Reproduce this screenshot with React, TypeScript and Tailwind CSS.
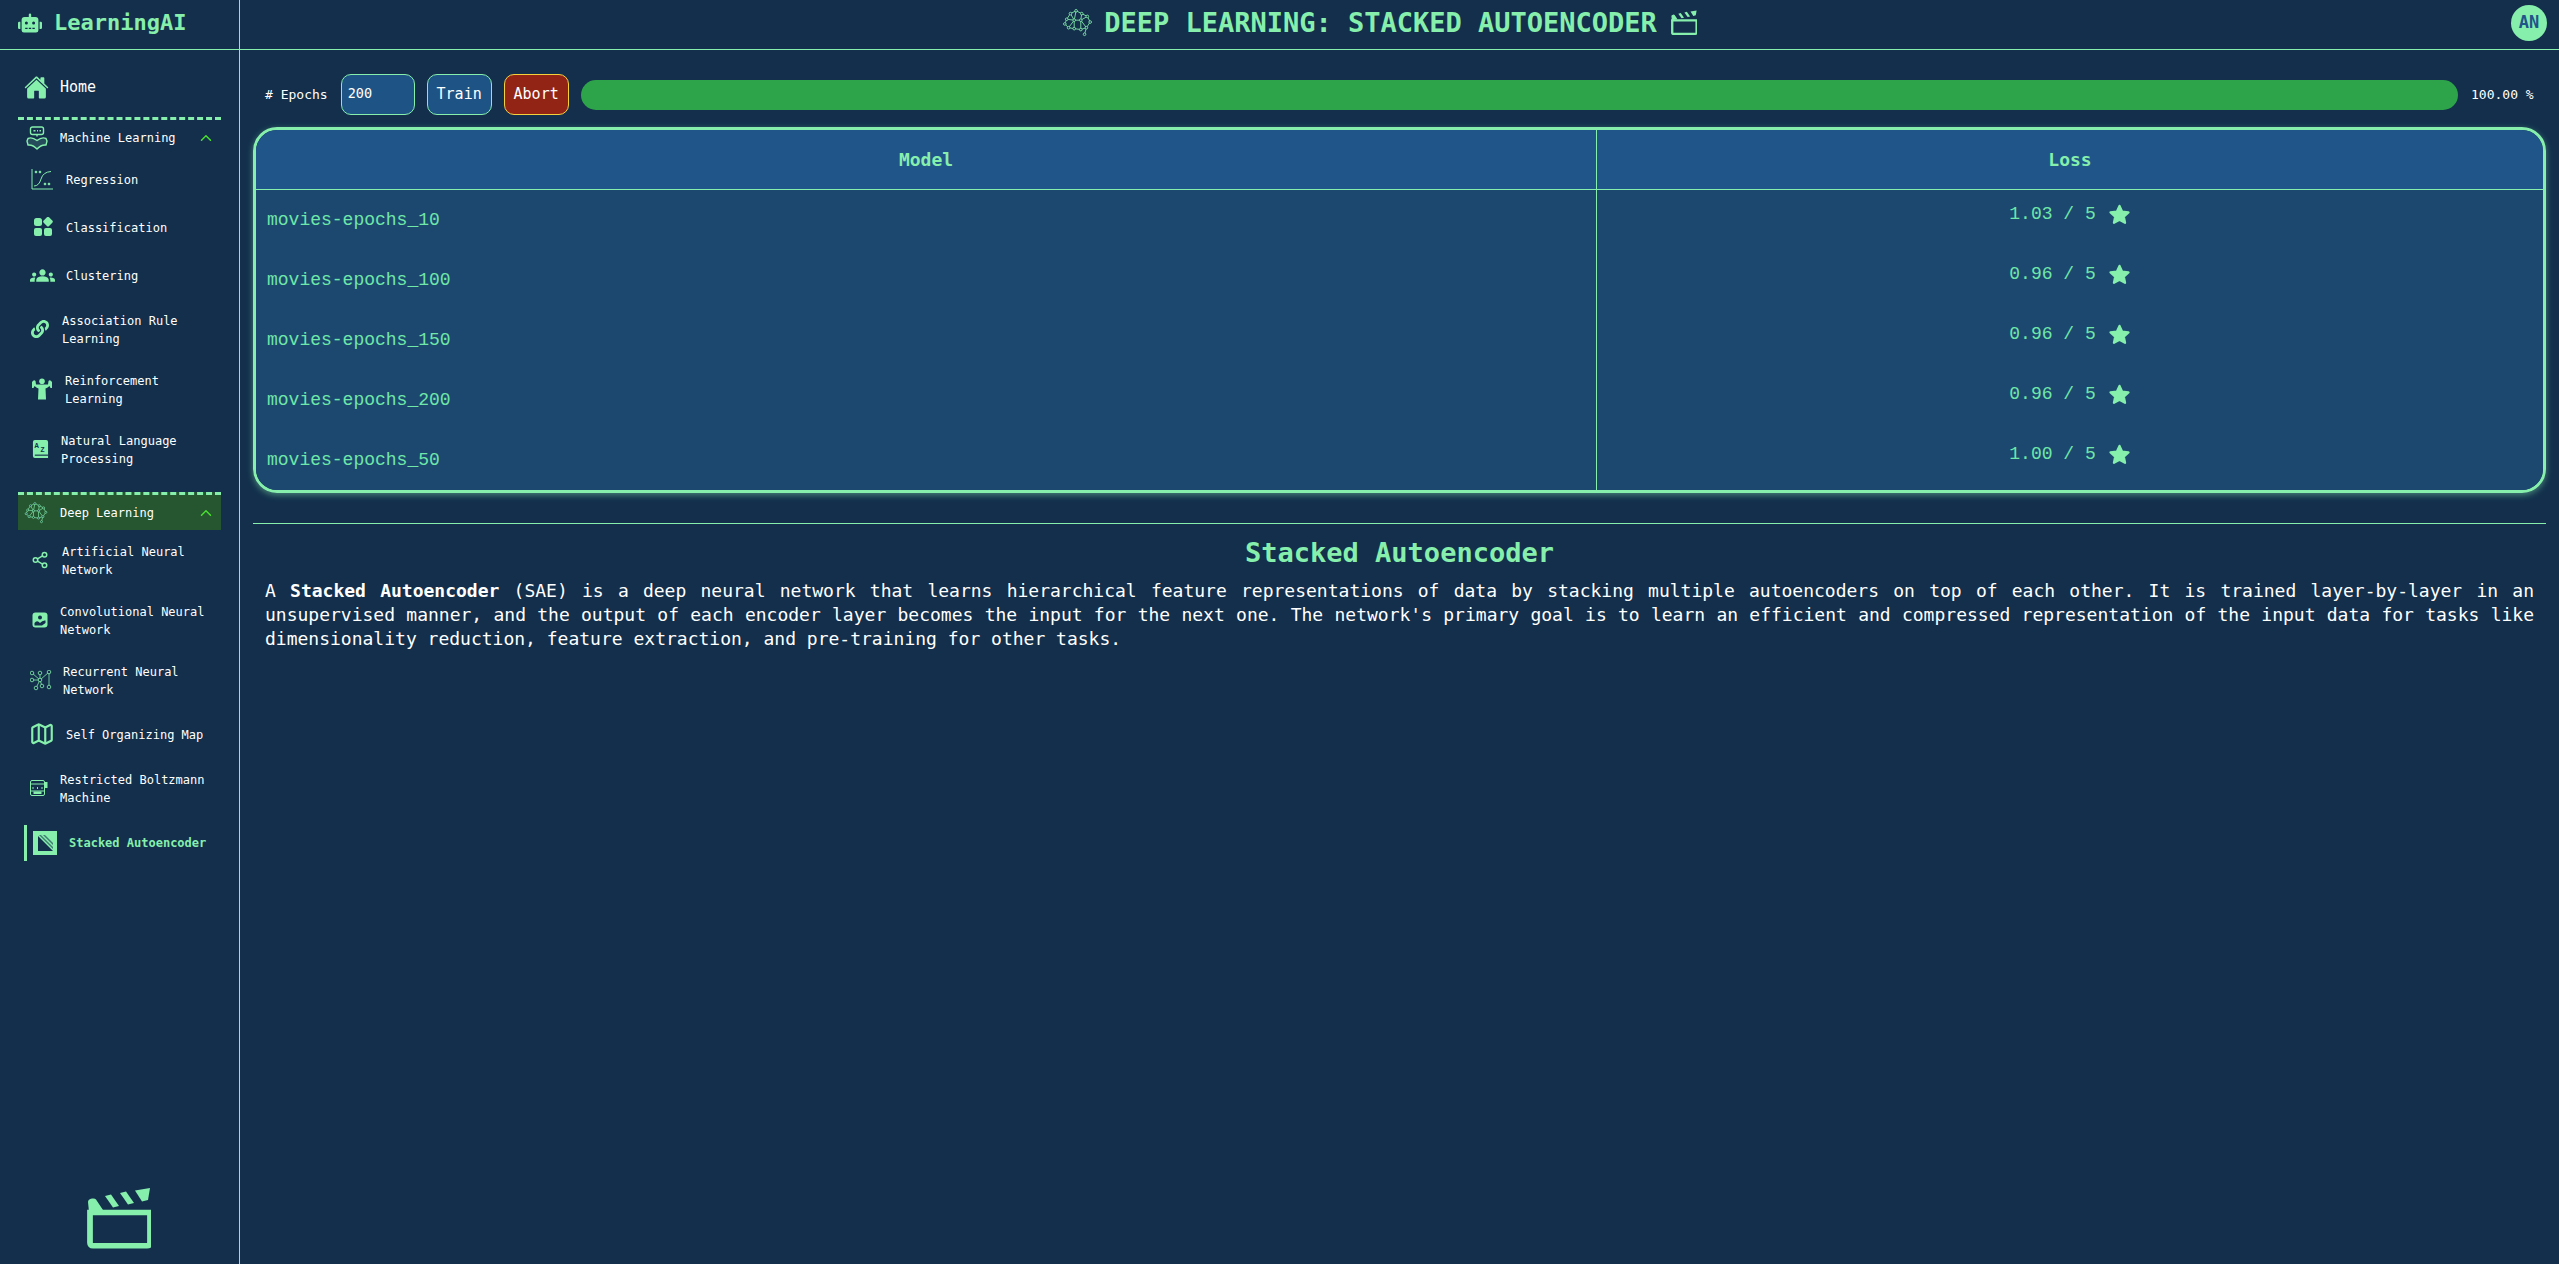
import { FaLink, FaRobot } from 'react-icons/fa'
import { IoHome } from 'react-icons/io5'
import { LuChevronUp, LuMap, LuShare2 } from 'react-icons/lu'
import { MdGroups } from 'react-icons/md'

const mono = "font-['DejaVu_Sans_Mono','Liberation_Mono',monospace]"

function Brain({ className }: { className?: string }) {
  const nodes = [
    [5, 12], [9, 6], [15, 3], [21, 6], [27, 9], [30, 15], [26, 21], [20, 23], [24, 28], [13, 22], [7, 21], [3, 17], [13, 13], [20, 13],
  ]
  const links = [
    [0, 1], [1, 2], [2, 3], [3, 4], [4, 5], [5, 6], [6, 7], [7, 9], [9, 10], [10, 11], [11, 0], [12, 13], [12, 1], [12, 2], [13, 3], [13, 4], [13, 6], [13, 7], [12, 9], [12, 0], [6, 8], [12, 10],
  ]
  return (
    <svg viewBox="0 0 33 32" className={className} fill="none" stroke="currentColor" strokeWidth="0.9">
      {links.map(([a, b], i) => (
        <line key={i} x1={nodes[a][0]} y1={nodes[a][1]} x2={nodes[b][0]} y2={nodes[b][1]} />
      ))}
      {nodes.map(([x, y], i) => (
        <circle key={i} cx={x} cy={y} r="1.4" fill="#132f4c" />
      ))}
    </svg>
  )
}

function Clapper({ className, strokeWidth = 2.4 }: { className?: string; strokeWidth?: number }) {
  return (
    <svg viewBox="0 0 64 62" className={className} fill="currentColor">
      <path d="M1 14 Q1 11 5 10.5 Q8 10 9 11.500 L16 22 L2 24 Z" />
      <path d="M18 8 L24 6.500 L32 18 L26 19.500 Z" />
      <path d="M33 5 L39 3.500 L47 15 L41 16.500 Z" />
      <path d="M48 2.500 L63 0 L61 12 L55 13.500 Z" />
      <path
        d="M3 26 H63 V57 Q63 60 60 60 H6 Q3 60 3 57 Z"
        fill="none"
        stroke="currentColor"
        strokeWidth={strokeWidth * 2.4}
        transform="translate(0 -1) scale(1 0.98)"
      />
    </svg>
  )
}

function ReaderBot({ className }: { className?: string }) {
  return (
    <svg viewBox="0 0 24 24" className={className} fill="none" stroke="currentColor" strokeWidth="1.400" strokeLinejoin="round">
      <rect x="5.500" y="1" width="13" height="7.500" rx="2" />
      <path d="M8.500 4.800h2M12 4.800h1M14.500 4.800h1.500" />
      <path d="M12 8.500v2" />
      <path d="M3 12.500 Q7 10.500 12 14.500 Q17 10.500 21 12.500 L22 15 L21 19 Q16 18.500 12 23 Q8 18.500 3 19 L2 15 Z" fill="currentColor" fillOpacity="0.15" />
    </svg>
  )
}

function RegressionIcon({ className }: { className?: string }) {
  return (
    <svg viewBox="0 0 22 22" className={className} fill="none" stroke="currentColor" strokeWidth="1">
      <path d="M1 1v20h21" />
      <path d="M3 18 Q8 18 10 11 Q12 4 20 3.500" />
      <circle cx="5" cy="4" r="0.900" fill="currentColor" />
      <circle cx="9" cy="4" r="0.900" fill="currentColor" />
      <circle cx="14" cy="16" r="0.900" fill="currentColor" />
      <circle cx="18" cy="16" r="0.900" fill="currentColor" />
    </svg>
  )
}

function ClassIcon({ className }: { className?: string }) {
  return (
    <svg viewBox="0 0 20 20" className={className} fill="currentColor">
      <rect x="1" y="1" width="8" height="8" rx="2.500" />
      <rect x="11.200" y="0.800" width="7.600" height="7.600" rx="1.500" transform="rotate(45 15 4.600)" />
      <rect x="1" y="11" width="8" height="8" rx="2" />
      <rect x="11" y="11" width="8" height="8" rx="2" />
    </svg>
  )
}

function MuscleIcon({ className }: { className?: string }) {
  return (
    <svg viewBox="0 0 22 22" className={className} fill="currentColor">
      <circle cx="11" cy="3.200" r="2.800" />
      <path d="M1 4 Q3 1 4.500 3 L5 6.500 Q8 6.500 11 6.500 Q14 6.500 17 6.500 L17.500 3 Q19 1 21 4 L21 10 L19.500 10 L18.500 8 Q16 10 14.500 10.500 L15 21.500 H7 L7.500 10.500 Q6 10 3.500 8 L2.500 10 L1 10 Z" />
    </svg>
  )
}

function BookAzIcon({ className }: { className?: string }) {
  return (
    <svg viewBox="0 0 18 22" className={className}>
      <path d="M3 1 H15 Q17 1 17 3 V20 H3 Q1 20 1 18 V3 Q1 1 3 1 Z" fill="currentColor" />
      <path d="M3 17 H17" stroke="#132f4c" strokeWidth="1.200" />
      <text x="2.500" y="9" fontSize="7" fontWeight="700" fill="#132f4c" fontFamily="Liberation Sans, sans-serif">A</text>
      <text x="9" y="14" fontSize="7" fontWeight="700" fill="#132f4c" fontFamily="Liberation Sans, sans-serif">Z</text>
    </svg>
  )
}

function ImageIcon({ className }: { className?: string }) {
  return (
    <svg viewBox="0 0 16 16" className={className}>
      <rect x="0.500" y="0.500" width="15" height="15" rx="3" fill="currentColor" />
      <circle cx="8" cy="5.500" r="2" fill="#132f4c" />
      <path d="M2.500 13.500 L2.500 11 Q5 7.500 8 11 Q10.500 8 13.500 8.500 V11 L10 13.500 Z" fill="#132f4c" />
    </svg>
  )
}

function RnnIcon({ className }: { className?: string }) {
  const pts = [[2, 3], [10, 3], [19, 2], [2, 10], [10, 10], [6, 18], [12, 16], [19, 17]]
  return (
    <svg viewBox="0 0 22 21" className={className} fill="none" stroke="currentColor" strokeWidth="0.800">
      <path d="M2 3 L10 10 L19 2 L19 17 M10 3 V10 L2 10 M10 10 L6 18 M10 10 L12 16" />
      {pts.map(([x, y], i) => (
        <circle key={i} cx={x} cy={y} r="1.800" fill="#132f4c" />
      ))}
    </svg>
  )
}

function SlotIcon({ className }: { className?: string }) {
  return (
    <svg viewBox="0 0 18 16" className={className} fill="none" stroke="currentColor" strokeWidth="1">
      <rect x="0.500" y="0.500" width="14" height="15" rx="1.500" />
      <path d="M0.500 4h14M3 7v2M7.500 7v2M12 7v2M0.500 11h14" />
      <rect x="4" y="12" width="7" height="1.500" fill="currentColor" />
      <rect x="15" y="2" width="2.500" height="6" fill="currentColor" stroke="none" />
    </svg>
  )
}

function StackedIcon({ className }: { className?: string }) {
  return (
    <svg viewBox="0 0 24 24" className={className}>
      <rect width="24" height="24" fill="currentColor" />
      <path d="M5 5 L20 20 H5 Z" fill="#132f4c" />
      <path d="M6 4 L20 18 V16 L8 4 Z M10 4 L20 14 V12 L12 4 Z" fill="#132f4c" fillOpacity="0.6" />
    </svg>
  )
}

type NavItem = {
  label: string[]
  icon: React.ReactNode
  gap: string
}

const mlItems: NavItem[] = [
  { label: ['Regression'], icon: <RegressionIcon className="h-[22px] w-[22px] shrink-0" />, gap: 'ml-[13px]' },
  { label: ['Classification'], icon: <ClassIcon className="ml-[2px] h-[20px] w-[20px] shrink-0" />, gap: 'ml-[13px]' },
  { label: ['Clustering'], icon: <MdGroups className="-ml-[1px] h-[25px] w-[25px] shrink-0" />, gap: 'ml-[13px]' },
  { label: ['Association Rule', 'Learning'], icon: <FaLink className="h-[18px] w-[18px] shrink-0" />, gap: 'ml-[9px]' },
  { label: ['Reinforcement', 'Learning'], icon: <MuscleIcon className="h-[22px] w-[22px] shrink-0" />, gap: 'ml-[12px]' },
  { label: ['Natural Language', 'Processing'], icon: <BookAzIcon className="ml-[1px] h-[21px] w-[17px] shrink-0" />, gap: 'ml-[8px]' },
]

const dlItems: NavItem[] = [
  { label: ['Artificial Neural', 'Network'], icon: <LuShare2 className="h-[18px] w-[18px] shrink-0" />, gap: 'ml-[9px]' },
  { label: ['Convolutional Neural', 'Network'], icon: <ImageIcon className="ml-[1px] h-[16px] w-[16px] shrink-0" />, gap: 'ml-[7px]' },
  { label: ['Recurrent Neural', 'Network'], icon: <RnnIcon className="-ml-[1px] h-[21px] w-[22px] shrink-0" />, gap: 'ml-[10px]' },
  { label: ['Self Organizing Map'], icon: <LuMap className="-ml-[2px] h-[26px] w-[26px] shrink-0" />, gap: 'ml-[13px]' },
  { label: ['Restricted Boltzmann', 'Machine'], icon: <SlotIcon className="-ml-[1px] h-[16px] w-[18px] shrink-0" />, gap: 'ml-[7px]' },
]

const results = [
  { model: 'movies-epochs_10', loss: '1.03' },
  { model: 'movies-epochs_100', loss: '0.96' },
  { model: 'movies-epochs_150', loss: '0.96' },
  { model: 'movies-epochs_200', loss: '0.96' },
  { model: 'movies-epochs_50', loss: '1.00' },
]

function SubItem({ item }: { item: NavItem }) {
  return (
    <div className={`flex items-center pl-[31px] text-[12px] leading-[18px] text-white ${item.label.length > 1 ? 'h-[60px]' : 'h-[48px]'}`}>
      <span className="flex w-[22px] shrink-0 justify-start text-[#86efac]">{item.icon}</span>
      <span className={`${item.gap} pt-[1px]`}>
        {item.label.map((line) => (
          <span key={line} className="block whitespace-nowrap">
            {line}
          </span>
        ))}
      </span>
    </div>
  )
}

function Star() {
  return (
    <svg viewBox="0 0 20 20" className="h-[23px] w-[23px] text-[#86efac]" fill="currentColor" stroke="currentColor" strokeWidth="2" strokeLinejoin="round">
      <path d="M10 2.500 L12.300 7.500 L17.800 8.100 L13.700 11.800 L14.800 17.200 L10 14.500 L5.200 17.200 L6.300 11.800 L2.200 8.100 L7.700 7.500 Z" />
    </svg>
  )
}

export default function App() {
  return (
    <div className={`flex h-screen w-full overflow-hidden bg-[#132f4c] text-white ${mono}`}>
      <aside className="flex h-full w-[240px] shrink-0 flex-col border-r border-[#86efac]">
        <div className="flex h-[50px] shrink-0 items-center border-b border-[#86efac] pb-[4px] pl-[18px]">
          <FaRobot className="h-[24px] w-[24px] text-[#86efac]" />
          <span className="ml-[12px] text-[22px] font-bold text-[#86efac]">LearningAI</span>
        </div>

        <div className="flex h-[67px] shrink-0 items-center pl-[24px] pt-[7px]">
          <IoHome className="h-[25px] w-[25px] text-[#86efac]" />
          <span className="ml-[11px] text-[15px]">Home</span>
        </div>

        <div className="mx-[18px] flex h-[38px] shrink-0 items-center border-t-[3px] border-dashed border-[#86efac] pl-[7px] pr-[6px] text-[12px]">
          <ReaderBot className="h-[24px] w-[24px] shrink-0 text-[#86efac]" />
          <span className="ml-[11px] flex-1 whitespace-nowrap">Machine Learning</span>
          <LuChevronUp className="h-[18px] w-[18px] text-[#4ade30]" />
        </div>

        {mlItems.map((item) => (
          <SubItem key={item.label[0]} item={item} />
        ))}

        <div className="mx-[18px] mt-[13px] flex h-[38px] shrink-0 items-center border-t-[3px] border-dashed border-[#86efac] bg-[#25562f] pl-[6px] pr-[6px] text-[12px]">
          <Brain className="h-[24px] w-[24px] shrink-0 text-[#86efac]" />
          <span className="ml-[12px] flex-1 whitespace-nowrap">Deep Learning</span>
          <LuChevronUp className="h-[18px] w-[18px] text-[#4ade30]" />
        </div>

        {dlItems.map((item) => (
          <SubItem key={item.label[0]} item={item} />
        ))}

        <div className="ml-[24px] flex h-[48px] items-center pt-[1px]">
          <div className="flex h-[36px] items-center border-l-[3px] border-[#86efac] pl-[6px]">
            <StackedIcon className="h-[24px] w-[24px] text-[#86efac]" />
            <span className="ml-[12px] whitespace-nowrap text-[12px] font-bold text-[#86efac]">Stacked Autoencoder</span>
          </div>
        </div>

        <div className="mt-auto flex justify-center pb-[14px] pr-[1px]">
          <Clapper className="h-[62px] w-[64px] text-[#86efac]" />
        </div>
      </aside>

      <div className="flex min-w-0 flex-1 flex-col">
        <header className="flex h-[50px] shrink-0 items-center border-b border-[#86efac] pb-[4px] pr-[12px]">
          <div className="flex flex-1 items-center justify-center pl-[8px] text-[#86efac]">
            <Brain className="mr-[11px] h-[32px] w-[31px]" />
            <h1 className="text-[27px] font-bold uppercase leading-none">Deep Learning: Stacked Autoencoder</h1>
            <Clapper className="ml-[14px] h-[26px] w-[26px]" />
          </div>
          <div className="flex h-[36px] w-[36px] items-center justify-center rounded-full bg-[#86efac] text-[17px] font-bold text-[#20558a]">
            AN
          </div>
        </header>

        <main className="flex min-h-0 flex-1 flex-col px-[13px]">
          <div className="flex h-[77px] shrink-0 items-center pl-[12px] pt-[12px]">
            <span className="whitespace-nowrap text-[13px]">#&nbsp;Epochs</span>
            <input
              readOnly
              value="200"
              className="ml-[13px] h-[41px] w-[74px] rounded-[10px] border border-[#86efac] bg-[#1e5485] px-[6px] pb-[4px] text-[13.500px] text-white outline-none"
            />
            <button className="ml-[12px] h-[41px] w-[65px] rounded-[10px] border border-[#86efac] bg-[#1e5485] text-[15px]">Train</button>
            <button className="ml-[12px] h-[41px] w-[65px] rounded-[10px] border border-[#f5d03d] bg-[#922416] text-[15px]">Abort</button>
            <div className="ml-[12px] h-[30px] flex-1 rounded-full bg-[#2ea44a]" />
            <span className="ml-[13px] w-[75px] whitespace-nowrap text-[13px]">100.00&nbsp;%</span>
          </div>

          <div className="w-full shrink-0 overflow-hidden rounded-[24px] border-[3px] border-[#86efac] shadow-[0_2px_6px_rgba(134,239,172,0.45)]">
            <div className="grid h-[60px] grid-cols-[1341px_1fr] border-b border-[#86efac] bg-[#20558a] text-[18px] font-bold text-[#86efac]">
              <div className="flex items-center justify-center border-r border-[#86efac]">Model</div>
              <div className="flex items-center justify-center">Loss</div>
            </div>
            {results.map((row) => (
              <div key={row.model} className="grid h-[60px] grid-cols-[1341px_1fr] bg-[#1c4870] font-['Liberation_Mono',monospace] text-[18px] text-[#6ee7a8]">
                <div className="flex items-center border-r border-[#86efac] pl-[11px]">{row.model}</div>
                <div className="flex items-center justify-center gap-[12px] pb-[12px]">
                  <span>{row.loss} / 5</span>
                  <Star />
                </div>
              </div>
            ))}
          </div>

          <hr className="mt-[30px] border-t border-[#86efac]" />
          <h2 className="mt-[12px] text-center text-[27px] font-bold leading-[34px] text-[#86efac]">Stacked Autoencoder</h2>
          <p className="mt-[9px] px-[12px] text-justify text-[18px] leading-[24px]">
            A <b>Stacked Autoencoder</b> (SAE) is a deep neural network that learns hierarchical feature representations of data by stacking multiple autoencoders on top of each other. It is trained layer-by-layer in an unsupervised manner, and the output of each encoder layer becomes the input for the next one. The network's primary goal is to learn an efficient and compressed representation of the input data for tasks like dimensionality reduction, feature extraction, and pre-training for other tasks.
          </p>
        </main>
      </div>
    </div>
  )
}
